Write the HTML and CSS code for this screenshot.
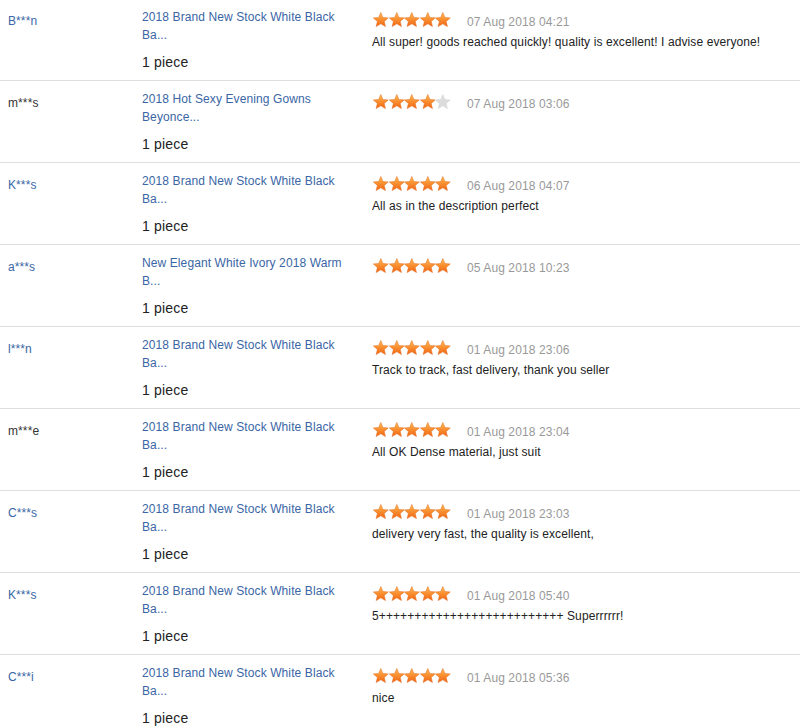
FILE: index.html
```html
<!DOCTYPE html>
<html>
<head>
<meta charset="utf-8">
<link rel="stylesheet" href="styles.css">
</head>
<body>
<svg class="defs" width="0" height="0" aria-hidden="true">
  <defs>
    <linearGradient id="gold" x1="0" y1="0" x2="0" y2="1">
      <stop offset="0" stop-color="#ffbd52"/>
      <stop offset="0.55" stop-color="#f88a2c"/>
      <stop offset="1" stop-color="#ef6414"/>
    </linearGradient>
    <path id="star" d="M8 0.3 L10.18 5.4 L15.7 5.85 L11.52 9.44 L12.8 14.8 L8 11.95 L3.2 14.8 L4.48 9.44 L0.3 5.85 L5.82 5.4 Z"/>
  </defs>
</svg>
<div class="list">
  <div class="row">
    <div class="name link">B***n</div>
    <div class="product"><a class="title">2018 Brand New Stock White Black Ba...</a><div class="qty">1 piece</div></div>
    <div class="review">
      <div class="rating"><span class="stars">
        <svg class="star on" viewBox="0 0 16 15"><use href="#star"/></svg><svg class="star on" viewBox="0 0 16 15"><use href="#star"/></svg><svg class="star on" viewBox="0 0 16 15"><use href="#star"/></svg><svg class="star on" viewBox="0 0 16 15"><use href="#star"/></svg><svg class="star on" viewBox="0 0 16 15"><use href="#star"/></svg>
      </span><span class="date">07 Aug 2018 04:21</span></div>
      <div class="text">All super! goods reached quickly! quality is excellent! I advise everyone!</div>
    </div>
  </div>
  <div class="row">
    <div class="name">m***s</div>
    <div class="product"><a class="title">2018 Hot Sexy Evening Gowns Beyonce...</a><div class="qty">1 piece</div></div>
    <div class="review">
      <div class="rating"><span class="stars">
        <svg class="star on" viewBox="0 0 16 15"><use href="#star"/></svg><svg class="star on" viewBox="0 0 16 15"><use href="#star"/></svg><svg class="star on" viewBox="0 0 16 15"><use href="#star"/></svg><svg class="star on" viewBox="0 0 16 15"><use href="#star"/></svg><svg class="star off" viewBox="0 0 16 15"><use href="#star"/></svg>
      </span><span class="date">07 Aug 2018 03:06</span></div>
    </div>
  </div>
  <div class="row">
    <div class="name link">K***s</div>
    <div class="product"><a class="title">2018 Brand New Stock White Black Ba...</a><div class="qty">1 piece</div></div>
    <div class="review">
      <div class="rating"><span class="stars">
        <svg class="star on" viewBox="0 0 16 15"><use href="#star"/></svg><svg class="star on" viewBox="0 0 16 15"><use href="#star"/></svg><svg class="star on" viewBox="0 0 16 15"><use href="#star"/></svg><svg class="star on" viewBox="0 0 16 15"><use href="#star"/></svg><svg class="star on" viewBox="0 0 16 15"><use href="#star"/></svg>
      </span><span class="date">06 Aug 2018 04:07</span></div>
      <div class="text">All as in the description perfect</div>
    </div>
  </div>
  <div class="row">
    <div class="name link">a***s</div>
    <div class="product"><a class="title">New Elegant White Ivory 2018 Warm B...</a><div class="qty">1 piece</div></div>
    <div class="review">
      <div class="rating"><span class="stars">
        <svg class="star on" viewBox="0 0 16 15"><use href="#star"/></svg><svg class="star on" viewBox="0 0 16 15"><use href="#star"/></svg><svg class="star on" viewBox="0 0 16 15"><use href="#star"/></svg><svg class="star on" viewBox="0 0 16 15"><use href="#star"/></svg><svg class="star on" viewBox="0 0 16 15"><use href="#star"/></svg>
      </span><span class="date">05 Aug 2018 10:23</span></div>
    </div>
  </div>
  <div class="row">
    <div class="name link">l***n</div>
    <div class="product"><a class="title">2018 Brand New Stock White Black Ba...</a><div class="qty">1 piece</div></div>
    <div class="review">
      <div class="rating"><span class="stars">
        <svg class="star on" viewBox="0 0 16 15"><use href="#star"/></svg><svg class="star on" viewBox="0 0 16 15"><use href="#star"/></svg><svg class="star on" viewBox="0 0 16 15"><use href="#star"/></svg><svg class="star on" viewBox="0 0 16 15"><use href="#star"/></svg><svg class="star on" viewBox="0 0 16 15"><use href="#star"/></svg>
      </span><span class="date">01 Aug 2018 23:06</span></div>
      <div class="text">Track to track, fast delivery, thank you seller</div>
    </div>
  </div>
  <div class="row">
    <div class="name">m***e</div>
    <div class="product"><a class="title">2018 Brand New Stock White Black Ba...</a><div class="qty">1 piece</div></div>
    <div class="review">
      <div class="rating"><span class="stars">
        <svg class="star on" viewBox="0 0 16 15"><use href="#star"/></svg><svg class="star on" viewBox="0 0 16 15"><use href="#star"/></svg><svg class="star on" viewBox="0 0 16 15"><use href="#star"/></svg><svg class="star on" viewBox="0 0 16 15"><use href="#star"/></svg><svg class="star on" viewBox="0 0 16 15"><use href="#star"/></svg>
      </span><span class="date">01 Aug 2018 23:04</span></div>
      <div class="text">All OK Dense material, just suit</div>
    </div>
  </div>
  <div class="row">
    <div class="name link">C***s</div>
    <div class="product"><a class="title">2018 Brand New Stock White Black Ba...</a><div class="qty">1 piece</div></div>
    <div class="review">
      <div class="rating"><span class="stars">
        <svg class="star on" viewBox="0 0 16 15"><use href="#star"/></svg><svg class="star on" viewBox="0 0 16 15"><use href="#star"/></svg><svg class="star on" viewBox="0 0 16 15"><use href="#star"/></svg><svg class="star on" viewBox="0 0 16 15"><use href="#star"/></svg><svg class="star on" viewBox="0 0 16 15"><use href="#star"/></svg>
      </span><span class="date">01 Aug 2018 23:03</span></div>
      <div class="text">delivery very fast, the quality is excellent,</div>
    </div>
  </div>
  <div class="row">
    <div class="name link">K***s</div>
    <div class="product"><a class="title">2018 Brand New Stock White Black Ba...</a><div class="qty">1 piece</div></div>
    <div class="review">
      <div class="rating"><span class="stars">
        <svg class="star on" viewBox="0 0 16 15"><use href="#star"/></svg><svg class="star on" viewBox="0 0 16 15"><use href="#star"/></svg><svg class="star on" viewBox="0 0 16 15"><use href="#star"/></svg><svg class="star on" viewBox="0 0 16 15"><use href="#star"/></svg><svg class="star on" viewBox="0 0 16 15"><use href="#star"/></svg>
      </span><span class="date">01 Aug 2018 05:40</span></div>
      <div class="text">5++++++++++++++++++++++++++ Superrrrrr!</div>
    </div>
  </div>
  <div class="row">
    <div class="name link">C***i</div>
    <div class="product"><a class="title">2018 Brand New Stock White Black Ba...</a><div class="qty">1 piece</div></div>
    <div class="review">
      <div class="rating"><span class="stars">
        <svg class="star on" viewBox="0 0 16 15"><use href="#star"/></svg><svg class="star on" viewBox="0 0 16 15"><use href="#star"/></svg><svg class="star on" viewBox="0 0 16 15"><use href="#star"/></svg><svg class="star on" viewBox="0 0 16 15"><use href="#star"/></svg><svg class="star on" viewBox="0 0 16 15"><use href="#star"/></svg>
      </span><span class="date">01 Aug 2018 05:36</span></div>
      <div class="text">nice</div>
    </div>
  </div>
</div>
</body>
</html>
```
FILE: styles.css
```css
html, body {
  margin: 0;
  padding: 0;
  background: #fff;
  overflow: hidden;
}
body {
  font-family: "Liberation Sans", Arial, sans-serif;
  font-size: 12px;
  letter-spacing: 0.1px;
  color: #333;
}
.defs {
  position: absolute;
  width: 0;
  height: 0;
}
.list {
  margin-top: -1px;
}
.row {
  display: flex;
  height: 82px;
  box-sizing: border-box;
  padding: 9px 0 0 8px;
  border-bottom: 1px solid #dedede;
}
.name {
  width: 134px;
  flex: none;
  margin-top: 4px;
  line-height: 18px;
  color: #333;
}
.name.link {
  color: #3a66a5;
}
.product {
  width: 230px;
  flex: none;
}
.title {
  display: block;
  width: 214px;
  line-height: 18px;
  color: #3a66a5;
  text-decoration: none;
}
.qty {
  margin-top: 8px;
  font-size: 14px;
  letter-spacing: 0.2px;
  line-height: 20px;
  color: #222;
}
.review {
  flex: 1;
  margin-top: 4px;
}
.rating {
  display: flex;
  align-items: flex-start;
  height: 19px;
}
.stars {
  display: flex;
  padding-left: 1px;
}
.star {
  width: 15.6px;
  height: 15px;
  display: block;
}
.star.on {
  fill: url(#gold);
  stroke: #e56a1c;
  stroke-width: 0.5;
}
.star.off {
  fill: #dcdcdc;
  stroke: #d4d4d4;
  stroke-width: 0.5;
}
.date {
  margin-left: 16px;
  margin-top: 1px;
  line-height: 18px;
  color: #999;
}
.text {
  margin-top: 2px;
  line-height: 18px;
  color: #222;
}
```
